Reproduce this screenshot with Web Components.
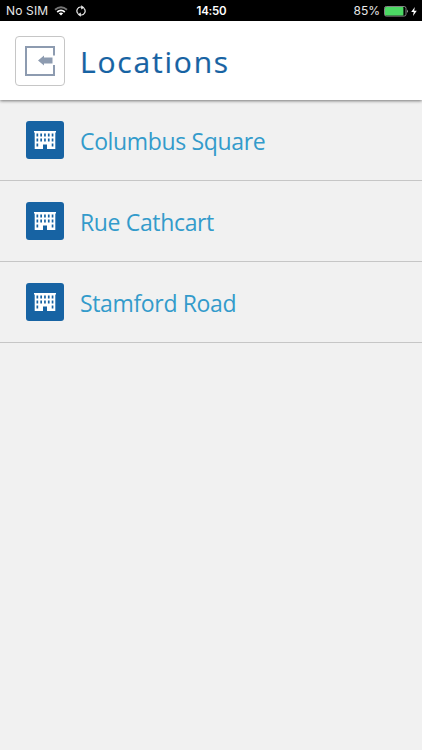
<!DOCTYPE html>
<html lang="en">
<head>
<meta charset="utf-8">
<title>Locations</title>
<style>
    body {
        margin: 0;
        min-height: 100vh;
        background: #f1f1f1;
        font-family: 'Open Sans', 'Noto Sans', sans-serif;
    }
</style>
</head>
<body>

<status-bar>
    <span slot="carrier">No SIM</span>
    <span slot="time">14:50</span>
    <span slot="battery">85%</span>
</status-bar>
<page-header>Locations</page-header>
<location-list>
    <location-item>Columbus Square</location-item>
    <location-item>Rue Cathcart</location-item>
    <location-item>Stamford Road</location-item>
</location-list>

<script>
function define(name, html) {
    var template = document.createElement('template');
    template.innerHTML = html;

    customElements.define(name,
        class extends HTMLElement {
            constructor() {
                super();
                this.attachShadow({ mode: 'open' })
                    .appendChild(template.content.cloneNode(true));
            }
        });
}

define('status-bar', `
    <style>
    :host {
        display: grid;
        grid-template-columns: 1fr auto 1fr;
        align-items: center;
        box-sizing: border-box;
        height: 21px;
        padding: 1px 5px 0 6px;
        background: #000;
        color: #e8e8e8;
        font: 12px/20px Inter, 'Liberation Sans', sans-serif;
    }

    .left, .right {
        display: flex;
        align-items: center;
    }

    .left {
        letter-spacing: 0.15px;
    }

    .right {
        justify-content: flex-end;
    }

    .time {
        font-weight: 600;
        font-size: 11.5px;
        letter-spacing: -0.2px;
        color: #fff;
    }

    svg {
        display: block;
    }

    .wifi { margin-left: 6px; }
    .sync { margin-left: 8px; }
    .cell { margin-left: 4px; }
    .bolt { margin-left: 2px; }
    </style>

    <div class="left">
        <slot name="carrier"></slot>
        <svg class="wifi" width="14" height="10" viewBox="0 0 14 10" fill="none" stroke-width="1.8">
            <path d="M1 3.8Q7-1.2 13 3.8" stroke="#777"/>
            <path d="M3.2 6Q7 2.8 10.8 6" stroke="#fff"/>
            <path d="M4.8 7.3Q7 5.6 9.2 7.3L7 9.6Z" fill="#fff"/>
        </svg>
        <svg class="sync" width="10" height="12" viewBox="0 0 10 12" fill="none" stroke="#e8e8e8" stroke-width="1.2">
            <path d="M2.3 8.8A3.8 3.8 0 0 1 6 2.3"/>
            <path d="M7.7 3.2A3.8 3.8 0 0 1 4 9.7"/>
            <path d="M5.2 0.2L8.4 2.5L5.2 4.6Z" fill="#e8e8e8" stroke="none"/>
            <path d="M4.8 11.8L1.6 9.5L4.8 7.4Z" fill="#e8e8e8" stroke="none"/>
        </svg>
    </div>
    <div class="time"><slot name="time"></slot></div>
    <div class="right">
        <slot name="battery"></slot>
        <svg class="cell" width="25" height="11" viewBox="0 0 25 11">
            <rect x="0.5" y="0.5" width="21.5" height="9.6" rx="1.8" fill="none" stroke="#bbb" stroke-width="0.7"/>
            <rect x="1" y="1" width="18.4" height="8.6" rx="0.8" fill="#4cd964"/>
            <path d="M23 3.5Q24.6 5.3 23 7Z" fill="#ddd"/>
        </svg>
        <svg class="bolt" width="6" height="9" viewBox="0 0 6 9" fill="#fff">
            <path d="M3.8 0L0.2 5H2.7L2 9L5.8 3.7H3.2Z"/>
        </svg>
    </div>
`);

define('page-header', `
    <style>
    :host {
        display: flex;
        align-items: center;
        box-sizing: border-box;
        height: 79px;
        padding-left: 15px;
        background: #fff;
        position: relative;
        box-shadow: 0 1px 3px rgba(0, 0, 0, 0.5);
    }

    button {
        display: flex;
        align-items: center;
        justify-content: center;
        width: 50px;
        height: 50px;
        padding: 0;
        background: #fff;
        border: 1px solid #c6c6c6;
        border-radius: 4px;
    }

    h1 {
        margin: 0 0 0 15px;
        padding-top: 2px;
        font-size: 30px;
        line-height: 40px;
        font-weight: 400;
        letter-spacing: 1.8px;
        color: #1763a3;
        -webkit-text-stroke: 0.2px #1763a3;
    }
    </style>

    <button aria-label="Back">
        <svg width="30" height="30" viewBox="0 0 30 30">
            <path d="M29 9.5V1H1V29H29V19" fill="none" stroke="#8d9bb0" stroke-width="2"/>
            <path d="M13 14.5L19 9.5V11.5H27.5V17.5H19V19.5Z" fill="#8d9bb0"/>
        </svg>
    </button>
    <h1><slot></slot></h1>
`);

define('location-list', `
    <style>
    :host {
        display: flex;
        flex-direction: column;
    }
    </style>
    <slot></slot>
`);

define('location-item', `
    <style>
    :host {
        display: flex;
        align-items: center;
        box-sizing: border-box;
        height: 81px;
        padding-left: 26px;
        border-bottom: 1px solid #c6c6c6;
        color: #339bcb;
        font-size: 23px;
        line-height: 32px;
        letter-spacing: -0.35px;
    }

    .icon {
        display: flex;
        align-items: center;
        justify-content: center;
        width: 38px;
        height: 38px;
        margin-right: 16px;
        border-radius: 3px;
        background: #1763a3;
    }

    .label {
        padding-top: 2px;
    }
    </style>

    <div class="icon">
        <svg width="22" height="18" viewBox="0 0 22 18">
            <path d="M0 0H22V1.5H21.3V18H13V13.5H9V18H0.7V1.5H0Z" fill="#fff"/>
            <path d="M2.5 2.5h1.7v3h-1.7zM6.3 2.5h1.7v3h-1.7zM10.1 2.5h1.7v3h-1.7zM13.9 2.5h1.7v3h-1.7zM17.7 2.5h1.7v3h-1.7zM2.5 7.5h1.7v3h-1.7zM6.3 7.5h1.7v3h-1.7zM10.1 7.5h1.7v3h-1.7zM13.9 7.5h1.7v3h-1.7zM17.7 7.5h1.7v3h-1.7zM2.5 12.5h1.7v3h-1.7zM17.7 12.5h1.7v3h-1.7z" fill="#1763a3"/>
        </svg>
    </div>
    <div class="label"><slot></slot></div>
`);
</script>
</body>
</html>
